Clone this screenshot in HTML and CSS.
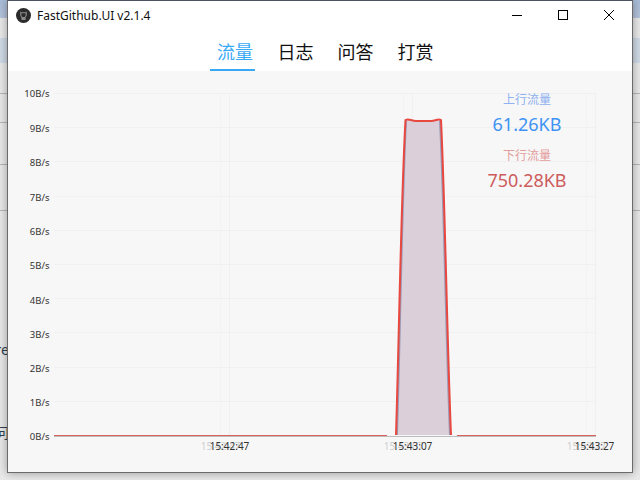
FILE: index.html
```html
<!DOCTYPE html>
<html lang="zh">

<head>
  <meta charset="UTF-8">
  <title>FastGithub.UI</title>
  <link rel="stylesheet" href="styles.css">
</head>

<body>
  <!-- bits of the window behind -->
  <span class="behind behind-re">re</span>
  <span class="behind behind-wen">问</span>

  <div class="window">
    <div class="titlebar">
      <svg class="app-icon" width="15" height="15" viewBox="0 0 15 15">
        <circle cx="7.5" cy="7.5" r="7.5" fill="#2b2b2b" />
        <path d="M4.2 3.6 L5.6 4.3 H9.4 L10.8 3.6 V7.6 L9.6 9.6 V12 H5.4 V9.6 L4.2 7.6 Z" fill="#8a8a8a" />
        <path d="M5.4 5.2 H9.6 V7.8 L8.6 9 H6.4 L5.4 7.8 Z" fill="#2b2b2b" />
      </svg>
      <span class="app-title">FastGithub.UI v2.1.4</span>
      <div class="window-buttons">
        <svg class="win-btn" width="46" height="20" viewBox="0 0 46 20">
          <path d="M18 10.5 H28" stroke="#000" fill="none" />
        </svg>
        <svg class="win-btn" width="46" height="20" viewBox="0 0 46 20">
          <rect x="18.5" y="5.5" width="9" height="9" stroke="#000" fill="none" />
        </svg>
        <svg class="win-btn" width="46" height="20" viewBox="0 0 46 20">
          <path d="M18 5 L28 15 M28 5 L18 15" stroke="#000" fill="none" />
        </svg>
      </div>
    </div>

    <div class="tabs">
      <div class="tab active">流量</div>
      <div class="tab">日志</div>
      <div class="tab">问答</div>
      <div class="tab">打赏</div>
    </div>

    <div class="chart">
      <svg class="chart-svg" width="623" height="400" viewBox="8 71 623 400">
        <g class="grid">
          <path d="M54 93.5 H596 M54 127.5 H596 M54 161.5 H596 M54 196.5 H596 M54 230.5 H596 M54 264.5 H596 M54 298.5 H596 M54 332.5 H596 M54 367.5 H596 M54 401.5 H596" />
          <path d="M229.5 93 V435 M412.5 93 V435 M595.5 93 V435" />
        </g>
        <g class="grid-faint">
          <path d="M220.5 93 V435 M403.5 93 V435 M586.5 93 V435" />
        </g>

        <g class="y-labels">
          <text x="49.5" y="96.5">10B/s</text>
          <text x="49.5" y="131.5">9B/s</text>
          <text x="49.5" y="165.5">8B/s</text>
          <text x="49.5" y="200.5">7B/s</text>
          <text x="49.5" y="234.5">6B/s</text>
          <text x="49.5" y="268.5">5B/s</text>
          <text x="49.5" y="303.5">4B/s</text>
          <text x="49.5" y="337.5">3B/s</text>
          <text x="49.5" y="371.5">2B/s</text>
          <text x="49.5" y="405.5">1B/s</text>
          <text x="49.5" y="439.5">0B/s</text>
        </g>

        <g class="x-labels-old">
          <text x="220.5" y="450">15:42:47</text>
          <text x="403.5" y="450">15:43:07</text>
          <text x="586.5" y="450">15:43:27</text>
        </g>
        <g class="x-labels">
          <text x="229.5" y="450">15:42:47</text>
          <text x="412.5" y="450">15:43:07</text>
          <text x="594.5" y="450">15:43:27</text>
        </g>

        <path class="area" d="M396 435 C399 340 401 200 405.5 120 C409 118 411 121 416 121 H431 C436 121 438 118 441 120 C445 200 447 340 451 435 Z" />
        <path class="axis" d="M54 436.5 H596" />
        <path class="line-blue" d="M397 435 C400 340 402 200 406 121 M440 121 C444 200 446 340 450 435" />
        <path class="line-base" d="M54 435.5 H387 M457 435.5 H596" />
        <path class="line-red" d="M396 435 C399 340 401 200 405.5 120 C409 118 411 121 416 121 H431 C436 121 438 118 441 120 C445 200 447 340 451 435" />
      </svg>

      <div class="legend">
        <div class="legend-label up">上行流量</div>
        <div class="legend-value up">61.26KB</div>
        <div class="legend-label down">下行流量</div>
        <div class="legend-value down">750.28KB</div>
      </div>
    </div>
  </div>
</body>

</html>
```

FILE: styles.css
```css
html,
body {
  margin: 0;
  height: 480px;
  overflow: hidden;
}

body {
  position: relative;
  background-color: #e9e9e9;
  background-image:
    linear-gradient(#a9bcd9 0, #b4c4dc 18px, transparent 18px),
    linear-gradient(transparent 38px, #d0dae6 38px, #d0dae6 63px, transparent 63px),
    linear-gradient(transparent 93px, #b5b5b5 93px, #b5b5b5 94px, transparent 94px),
    linear-gradient(transparent 122px, #b5b5b5 122px, #b5b5b5 123px, transparent 123px),
    linear-gradient(transparent 164px, #b5b5b5 164px, #b5b5b5 165px, transparent 165px),
    linear-gradient(transparent 210px, #b5b5b5 210px, #b5b5b5 211px, transparent 211px);
  font-family: "Noto Sans", "Noto Sans CJK SC", sans-serif;
}

.behind {
  position: absolute;
  right: 631px;
  font-size: 14px;
  line-height: 18px;
  color: #2c3e50;
  white-space: nowrap;
}

.behind-re {
  top: 341px;
}

.behind-wen {
  top: 424px;
}

/* the app window sits on the desktop */
.window {
  position: absolute;
  left: 7px;
  top: 0;
  width: 624px;
  height: 471px;
  display: flex;
  flex-direction: column;
  background-color: white;
  border: 1px solid #6b6b6b;
  border-top-color: #4d5360;
  box-shadow: 0 0 9px rgba(0, 0, 0, 0.35);
}

.titlebar {
  display: flex;
  align-items: center;
  height: 28px;
  padding-left: 8px;
}

.app-icon {
  margin-right: 6px;
}

.app-title {
  font-size: 12px;
  color: #111;
}

.window-buttons {
  display: flex;
  margin-left: auto;
}

.win-btn {
  display: block;
}

.tabs {
  display: flex;
  gap: 15px;
  height: 42px;
  padding-left: 202px;
}

.tab {
  width: 45px;
  padding-left: 7.5px;
  box-sizing: border-box;
  font-family: "Noto Sans CJK SC", sans-serif;
  font-size: 18px;
  line-height: 44px;
  color: #111;
  white-space: nowrap;
}

.tab.active {
  padding-left: 7px;
  color: #3aa9f5;
  border-bottom: 2px solid #3aa9f5;
}

.chart {
  position: relative;
  flex: 1;
  background-color: #f7f7f7;
}

.chart-svg {
  display: block;
}

.grid path {
  stroke: #f0f0f0;
  fill: none;
}

.grid-faint path {
  stroke: #f3f3f3;
  fill: none;
}

.y-labels text {
  font-size: 9.5px;
  fill: #333;
  text-anchor: end;
}

.x-labels text,
.x-labels-old text {
  font-size: 10px;
  text-anchor: middle;
}

.x-labels text {
  fill: #333;
}

.x-labels-old text {
  fill: #cfcfcf;
}

.area {
  fill: #dbd0d9;
}

.axis {
  stroke: #bdbdbd;
  fill: none;
}

.line-blue {
  stroke: #9a9ab8;
  stroke-width: 2;
  fill: none;
}

.line-base {
  stroke: #d9635c;
  fill: none;
}

.line-red {
  stroke: #e8483f;
  stroke-width: 2;
  stroke-linejoin: round;
  fill: none;
}

.legend {
  position: absolute;
  left: 459px;
  top: 20px;
  width: 120px;
  display: flex;
  flex-direction: column;
  align-items: center;
  font-family: "Noto Sans", "Noto Sans CJK SC", sans-serif;
}

.legend-label {
  font-size: 12px;
  line-height: 18px;
}

.legend-value {
  font-size: 18px;
  line-height: 30px;
  margin-bottom: 8px;
}

.legend-label.up {
  color: #8fb1f0;
}

.legend-value.up {
  color: #3d93f5;
}

.legend-label.down {
  color: #e39c9c;
}

.legend-value.down {
  color: #cd5c5c;
}
```
